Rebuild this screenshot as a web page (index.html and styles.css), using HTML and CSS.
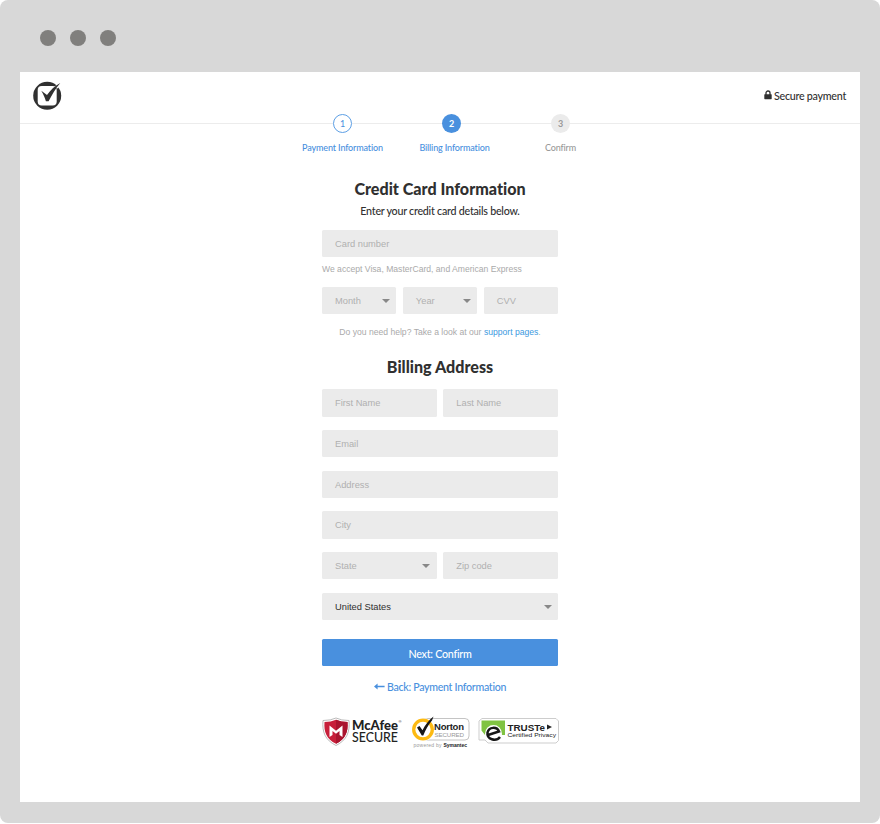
FILE: index.html
```
<!DOCTYPE html>
<html lang="en">
<head>
<meta charset="utf-8">
<title>Billing Information</title>
<link rel="stylesheet" href="styles.css">
</head>
<body>
<div class="browser">
  <div class="dots"><i></i><i></i><i></i></div>
  <main class="page">
    <header class="header">
      <svg class="logo" width="30" height="30" viewBox="0 0 30 30">
        <circle cx="14.2" cy="14.8" r="14" fill="#303030"/>
        <rect x="4.700" y="5.100" width="19" height="19.300" rx="4" fill="#fff"/>
        <path d="M21 6L27.500 1L25 7.500z" fill="#fff"/>
        <path d="M8.300 9.700l5.700 4.300C17.600 9.300 21.500 5 27.300 2C22.500 7.800 19 13.500 15.600 20.300h-2.700C12 17 10.500 13.500 8.300 9.700z" fill="#303030"/>
      </svg>
      <div class="secure">
        <svg width="8" height="10" viewBox="0 0 8 10"><path d="M2 5V3a2 2 0 0 1 4 0v2" fill="none" stroke="#303030" stroke-width="1.3"/><rect x=".3" y="4.200" width="7.400" height="5" rx=".6" fill="#303030"/></svg>
        <span>Secure payment</span>
      </div>
    </header>
    <ol class="steps">
      <li class="step done"><b>1</b><span>Payment Information</span></li>
      <li class="step current"><b>2</b><span>Billing Information</span></li>
      <li class="step"><b>3</b><span>Confirm</span></li>
    </ol>
    <form class="form">
      <h1>Credit Card Information</h1>
      <p class="lead">Enter your credit card details below.</p>
      <div class="field">Card number</div>
      <p class="hint">We accept Visa, MasterCard, and American Express</p>
      <div class="row">
        <div class="field select">Month</div>
        <div class="field select">Year</div>
        <div class="field">CVV</div>
      </div>
      <p class="help">Do you need help? Take a look at our <a>support pages</a>.</p>
      <h2>Billing Address</h2>
      <div class="stack">
        <div class="row"><div class="field">First Name</div><div class="field">Last Name</div></div>
        <div class="field">Email</div>
        <div class="field">Address</div>
        <div class="field">City</div>
        <div class="row"><div class="field select">State</div><div class="field">Zip code</div></div>
        <div class="field select filled">United States</div>
      </div>
      <div class="button">Next: Confirm</div>
      <a class="back"><svg width="11" height="7" viewBox="0 0 11 7"><path d="M0 3.500L3.600 .6v2.100H10.600v1.600H3.600v2.100z" fill="#4990de"/></svg><span>Back: Payment Information</span></a>
      <div class="badges">
        <svg width="81" height="32" viewBox="322 716 81 32">
          <path d="M323 720.500Q331 720.500 336 718Q341 720.500 349 720.500C350 732 347 740 336 745.500C325 740 322 732 323 720.500z" fill="#fff" stroke="#aaa" stroke-width=".8"/>
          <path d="M324.500 722Q331 722 336 719.700Q341 722 347.500 722C348.300 732 345.500 739 336 743.800C326.500 739 323.700 732 324.500 722z" fill="#c71f3a"/>
          <path d="M336 719.700Q341 722 347.500 722C348.300 732 345.500 739 336 743.800z" fill="#a9152f"/>
          <path d="M329.500 737V725.500L336 730.800L342.500 725.500V737L339.500 735V731L336 733.800L332.500 731V735z" fill="#fff"/>
          <text class="mcafee" x="352" y="729.600" textLength="46" lengthAdjust="spacingAndGlyphs">McAfee</text>
          <text class="reg" x="398.500" y="723">®</text>
          <text class="mcsecure" x="352" y="742" textLength="46" lengthAdjust="spacingAndGlyphs">SECURE</text>
        </svg>
        <svg width="60" height="33" viewBox="410 716 60 33">
          <rect x="420" y="718.500" width="48" height="21.500" rx="4" fill="#fff" stroke="#b5b5b5" stroke-width=".8"/>
          <circle cx="422" cy="729.500" r="11.500" fill="#fff"/>
          <circle cx="422" cy="729.500" r="9.300" fill="#fff" stroke="#fdba12" stroke-width="3.300"/>
          <path d="M416 727.500l2.500-1.500 3 4.300C424 725 427.500 720.500 432.500 716.500L431 720.500C427 725 424.500 730 422.300 735.500h-1.500z" fill="#171717"/>
          <text class="norton" x="433" y="730" textLength="30">Norton</text>
          <text class="secured" x="433.500" y="736.800" textLength="29.500">SECURED</text>
          <text class="powered" x="412.500" y="746.500" textLength="28">powered by</text>
          <text class="symantec" x="442.500" y="746.500" textLength="23.500">Symantec</text>
        </svg>
        <svg width="82" height="28" viewBox="478 717 82 28">
          <path d="M482 719.500H556L558.500 722V741.500L556 744H488L485 741H479V722z" fill="#fff" stroke="#c7c7c7" stroke-width=".9"/>
          <path d="M481.500 721.500H505V736H502A9 9 0 0 0 485 736L481.500 731.500z" fill="#80c342"/>
          <circle cx="493.500" cy="734.500" r="8.400" fill="#fff"/>
          <path d="M488 736L499 732.500C497 727.500 489 727.500 487.500 733.500C486.500 740.500 496 743 500 738" fill="none" stroke="#171717" stroke-width="2.500"/>
          <text class="truste" x="507.500" y="731.500" textLength="37.500" lengthAdjust="spacingAndGlyphs">TRUSTe</text>
          <path d="M547 725.500l5 2.500-5 2.500z" fill="#222"/>
          <text class="privacy" x="507.500" y="738.300" textLength="48.500" lengthAdjust="spacingAndGlyphs">Certified Privacy</text>
        </svg>
      </div>
    </form>
  </main>
</div>
</body>
</html>
```
FILE: styles.css
```
* { box-sizing: border-box; }
body { margin: 0; background: #fff; font-family: Lato, sans-serif; color: #303030; font-variant-ligatures: none; }
.browser { height: 823px; padding: 30px 20px 21px; border-radius: 8px; background: #d8d8d8; }
.dots { display: flex; gap: 14px; padding-left: 20px; height: 42px; }
.dots i { width: 16px; height: 16px; border-radius: 50%; background: #807f7d; }
.page { height: 730px; background: #fff; }
.header { display: flex; justify-content: space-between; height: 52px; padding: 9px 14px 0 13px; border-bottom: 1px solid #ececec; }
.secure { display: flex; gap: 2px; height: 28px; align-items: center; font-size: 10.700px; letter-spacing: -.26px; font-weight: 500; white-space: nowrap; }
.steps { display: grid; grid-template-columns: repeat(3, 109px); justify-content: center; margin: -10px 0 0; padding: 0 0 0 23px; list-style: none; }
.step { display: flex; flex-direction: column; align-items: center; font-size: 9px; letter-spacing: -.14px; font-weight: 500; color: #999; white-space: nowrap; }
.step b { width: 19px; height: 19px; border-radius: 50%; line-height: 19px; text-align: center; background: #ebebeb; font-size: 9px; margin-bottom: 8px; }
.step span { line-height: 14px; }
.step.done { color: #4990de; }
.step.done b { background: #fff; border: 1px solid #5d9fe5; line-height: 17px; font-weight: 400; }
.step.current { color: #4990de; }
.step.current span { padding-left: 6px; }
.step.current b { background: #4990de; color: #fff; }
.form { width: 236px; margin: 24px auto 0; }
h1, h2, p { margin: 0; text-align: center; }
h1, h2 { font-size: 16.100px; line-height: 20px; font-weight: 900; white-space: nowrap; }
.lead { font-size: 10.700px; letter-spacing: -.24px; font-weight: 500; line-height: 14px; margin: 5px 0 12px; white-space: nowrap; }
.field { position: relative; flex: 1; height: 27.400px; padding-left: 13px; border-radius: 1.500px; background: #ebebeb; color: #b0b0b0; font: 9.300px/28.400px "Liberation Sans", Arial, sans-serif; }
.select::after { content: ""; position: absolute; right: 6.500px; top: 12px; border: 4px solid transparent; border-top: 4.500px solid #888; border-bottom: 0; }
.filled { color: #303030; }
.row { display: flex; gap: 6.600px; }
.hint, .help { font: 8.600px/12px "Liberation Sans", Arial, sans-serif; color: #aaa; white-space: nowrap; }
.hint { text-align: left; margin: 6px 0 11.500px; }
.help { margin: 12px 0 19px; }
.help a { color: #3b99e0; }
.stack { display: flex; flex-direction: column; gap: 13.300px; margin-top: 12px; }
.stack .field { flex: 1 0 27.400px; }
.button { height: 27.500px; margin-top: 18.500px; border-radius: 1.500px; background: #4990de; color: #fff; text-align: center; font-size: 10.700px; letter-spacing: -.24px; line-height: 29px; font-weight: 500; }
.back { display: flex; justify-content: center; align-items: center; gap: 2px; height: 14px; margin-top: 13.500px; font-size: 10.600px; letter-spacing: -.28px; font-weight: 500; color: #4990de; white-space: nowrap; }
.badges { display: flex; width: 238px; margin-top: 22px; gap: 7.500px; align-items: flex-start; }
.badges svg { flex: none; }
.badges text { font-family: "Liberation Sans", Arial, sans-serif; fill: #222; }
.badges .mcafee { font: 900 13px/1 Lato, sans-serif; }
.badges .mcsecure { font: 500 13px/1 Lato, sans-serif; }
.badges .reg { font-size: 4px; }
.badges .norton { font-size: 9.500px; font-weight: 700; }
.badges .secured { font-size: 6.200px; fill: #999; }
.badges .powered { font-size: 5px; fill: #999; }
.badges .symantec { font-size: 5px; font-weight: 700; }
.badges .truste { font-size: 9.500px; font-weight: 700; }
.badges .privacy { font-size: 5.500px; }
```
